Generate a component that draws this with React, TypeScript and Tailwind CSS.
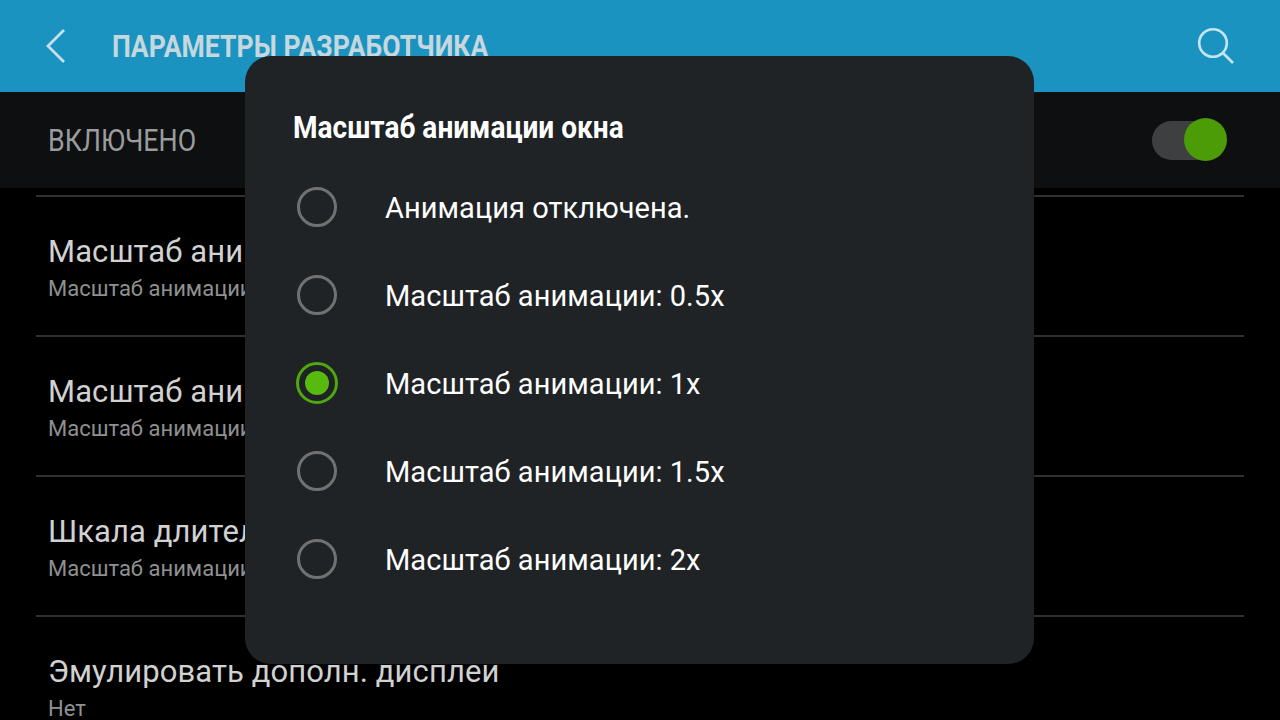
const settings = [
  { title: "Масштаб анимации окна", sub: "Масштаб анимации 1x" },
  { title: "Масштаб анимации перехода", sub: "Масштаб анимации 1x" },
  { title: "Шкала длительности аниматора", sub: "Масштаб анимации 1x" },
];

const options = [
  { label: "Анимация отключена." },
  { label: "Масштаб анимации: 0.5x" },
  { label: "Масштаб анимации: 1x", checked: true },
  { label: "Масштаб анимации: 1.5x" },
  { label: "Масштаб анимации: 2x" },
];

function Radio({ checked }: { checked?: boolean }) {
  if (checked) {
    return (
      <span className="flex h-[42px] w-[42px] items-center justify-center rounded-full border-[3px] border-[#4fa80e]">
        <span className="h-[24px] w-[24px] rounded-full bg-[#58b90f]" />
      </span>
    );
  }
  return <span className="h-[40px] w-[40px] rounded-full border-[3px] border-[#6f7172]" />;
}

export default function App() {
  return (
    <div className="relative h-[720px] w-[1280px] overflow-hidden bg-black font-['Roboto',sans-serif]">
      <header className="flex h-[92px] items-center justify-between bg-[#1a93c0] pl-[44px] pr-[45px]">
        <div className="flex items-center gap-[45px]">
          <svg width="23" height="36" viewBox="0 0 23 36" fill="none" stroke="#c9dfe8" strokeWidth="2.8">
            <path d="M20 2 4 18l16 16" />
          </svg>
          <h1 className="mt-[2px] origin-left scale-x-[0.858] whitespace-nowrap text-[31px] font-bold text-[#c5d7df]">
            ПАРАМЕТРЫ РАЗРАБОТЧИКА
          </h1>
        </div>
        <svg width="38" height="38" viewBox="0 0 38 38" fill="none" stroke="#c4e6f2" strokeWidth="2.6">
          <circle cx="16" cy="16" r="13.8" />
          <path d="m26 26 10 10" />
        </svg>
      </header>

      <div className="flex h-[96px] items-center justify-between bg-[#0d0f10] pl-[48px] pr-[54px]">
        <span className="origin-left scale-x-[0.838] text-[32px] text-[#9a9c9d]">ВКЛЮЧЕНО</span>
        <div className="relative h-[39px] w-[74px] rounded-full bg-[#3e3f40]">
          <span className="absolute -right-[1px] -top-[3px] h-[43px] w-[43px] rounded-full bg-[#4c9c07]" />
        </div>
      </div>

      <div className="pt-[7px]">
        {settings.map((s) => (
          <div key={s.title} className="mx-[36px] h-[140px] border-t-2 border-[#2f3030] px-[12px] pt-[36px]">
            <div className="text-[31px] leading-[38px] tracking-[0.09px] text-[#d0d1d1]">{s.title}</div>
            <div className="mt-[5px] text-[22px] leading-[26px] text-[#8f9090]">{s.sub}</div>
          </div>
        ))}
        <div className="mx-[36px] h-[140px] border-t-2 border-[#2f3030] px-[12px] pt-[36px]">
          <div className="text-[31px] leading-[38px] tracking-[0.09px] text-[#d0d1d1]">Эмулировать дополн. дисплеи</div>
          <div className="mt-[5px] text-[22px] leading-[26px] text-[#8f9090]">Нет</div>
        </div>
      </div>

      <div className="absolute left-[245px] top-[56px] h-[608px] w-[789px] rounded-[26px] bg-[#202325] pl-[48px] pt-[50px]">
        <h2 className="origin-left scale-x-[0.876] whitespace-nowrap text-[32px] font-bold leading-[42px] text-white">
          Масштаб анимации окна
        </h2>
        <ul className="mt-[15px] flex flex-col">
          {options.map((o) => (
            <li key={o.label} className="flex h-[88px] items-center">
              <span className="flex w-[48px] items-center justify-center">
                <Radio checked={o.checked} />
              </span>
              <span className="ml-[44px] mt-[4px] text-[29px] tracking-[0.05px] text-white">{o.label}</span>
            </li>
          ))}
        </ul>
      </div>
    </div>
  );
}
